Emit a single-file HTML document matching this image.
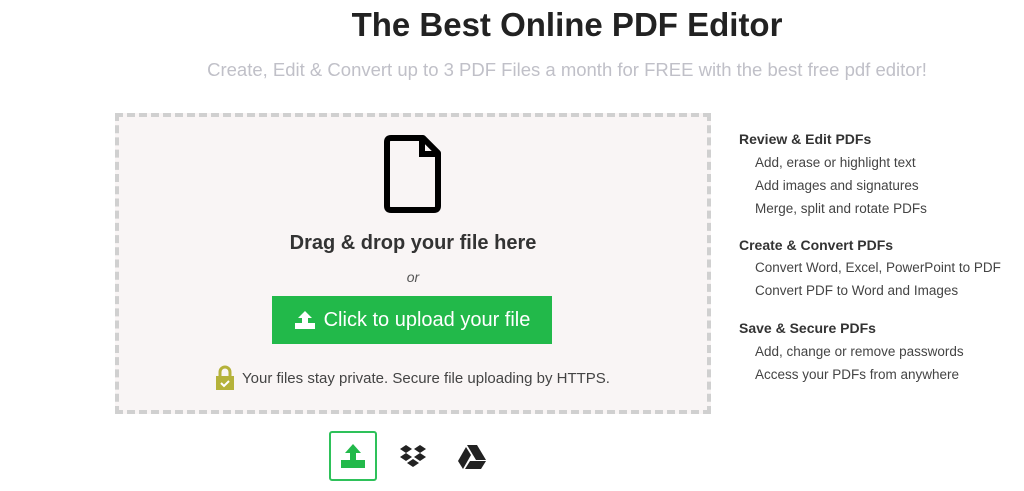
<!DOCTYPE html>
<html><head><style>
*{margin:0;padding:0;box-sizing:border-box}
body{width:1024px;height:491px;background:#fff;font-family:"Liberation Sans",sans-serif;position:relative;overflow:hidden;color:#333}
.a{position:absolute}
h1{position:absolute;left:0;width:1134px;top:6px;text-align:center;font-size:33px;font-weight:bold;color:#222}
.sub{left:0;width:1134px;top:59px;text-align:center;font-size:18.5px;color:#c0c0c8}
.box{left:115px;top:113px;width:596px;height:301px;border:4px dashed #d0d0d0;background:#f9f5f5}
.drag{left:115px;width:596px;top:232px;text-align:center;font-size:20px;font-weight:bold;color:#333}
.or{left:115px;width:596px;top:269px;text-align:center;font-size:14px;font-style:italic;color:#555}
.btn{left:272px;top:296px;width:280px;height:48px;background:#22b94a;color:#fff;font-size:20px;display:flex;align-items:center;justify-content:center;gap:8px}
.sec{left:242px;top:370px;font-size:15px;color:#444}
.h{font-size:14px;font-weight:bold;color:#333;left:739px}
.p{font-size:13.5px;color:#444;left:755px}
</style></head><body>
<h1>The Best Online PDF Editor</h1>
<div class="a sub">Create, Edit &amp; Convert up to 3 PDF Files a month for FREE with the best free pdf editor!</div>
<div class="a box"></div>
<svg class="a" style="left:382px;top:134px" width="60" height="80" viewBox="0 0 60 80"><path d="M9 4H41L56 19V72Q56 76 52 76H9Q5 76 5 72V8Q5 4 9 4Z" fill="none" stroke="#000" stroke-width="6" stroke-linejoin="round"/><path d="M40 4V20H56" fill="none" stroke="#000" stroke-width="6"/></svg>
<div class="a drag">Drag &amp; drop your file here</div>
<div class="a or">or</div>
<div class="a btn"><svg width="22" height="20" viewBox="0 0 22 20"><path d="M11 1L4 8H8V14H14V8H18Z" fill="#fff"/><rect x="1" y="13" width="20" height="6" fill="#fff"/></svg>Click to upload your file</div>
<svg class="a" style="left:215px;top:365px" width="20" height="26" viewBox="0 0 20 26"><path d="M5 12V7a5 5 0 0 1 10 0v5" fill="none" stroke="#b5b23a" stroke-width="3"/><rect x="1" y="11" width="18" height="14" fill="#b5b23a"/><path d="M6 18l3 3 5-5" fill="none" stroke="#fff" stroke-width="2"/></svg>
<div class="a sec">Your files stay private. Secure file uploading by HTTPS.</div>
<div class="a" style="left:329px;top:431px;width:48px;height:50px;border:2px solid #2ec15a;border-radius:3px"></div>
<svg class="a" style="left:339px;top:442px" width="28" height="28" viewBox="0 0 28 28"><path d="M14 2L6 11H11V19H17V11H22Z" fill="#22b94a"/><rect x="2" y="18" width="24" height="8" fill="#22b94a"/></svg>
<svg class="a" style="left:399px;top:444px" width="28" height="24" viewBox="0 0 28 24"><g fill="#222"><path d="M7 1L1 5L7 9L13 5Z"/><path d="M21 1L15 5L21 9L27 5Z"/><path d="M1 13L7 17L13 13L7 9Z"/><path d="M27 13L21 17L15 13L21 9Z"/><path d="M8 19L14 23L20 19L14 15Z"/></g></svg>
<svg class="a" style="left:457px;top:444px" width="30" height="26" viewBox="0 0 30 26"><g fill="#222"><path d="M10 1H20L29 16H19Z"/><path d="M9 3L14 11L6 25L1 17Z"/><path d="M8 25L13 17H29L24 25Z"/></g></svg>
<div class="a h" style="top:131px">Review &amp; Edit PDFs</div>
<div class="a p" style="top:155px">Add, erase or highlight text</div>
<div class="a p" style="top:178px">Add images and signatures</div>
<div class="a p" style="top:201px">Merge, split and rotate PDFs</div>
<div class="a h" style="top:237px">Create &amp; Convert PDFs</div>
<div class="a p" style="top:260px">Convert Word, Excel, PowerPoint to PDF</div>
<div class="a p" style="top:283px">Convert PDF to Word and Images</div>
<div class="a h" style="top:320px">Save &amp; Secure PDFs</div>
<div class="a p" style="top:344px">Add, change or remove passwords</div>
<div class="a p" style="top:367px">Access your PDFs from anywhere</div>
</body></html>
